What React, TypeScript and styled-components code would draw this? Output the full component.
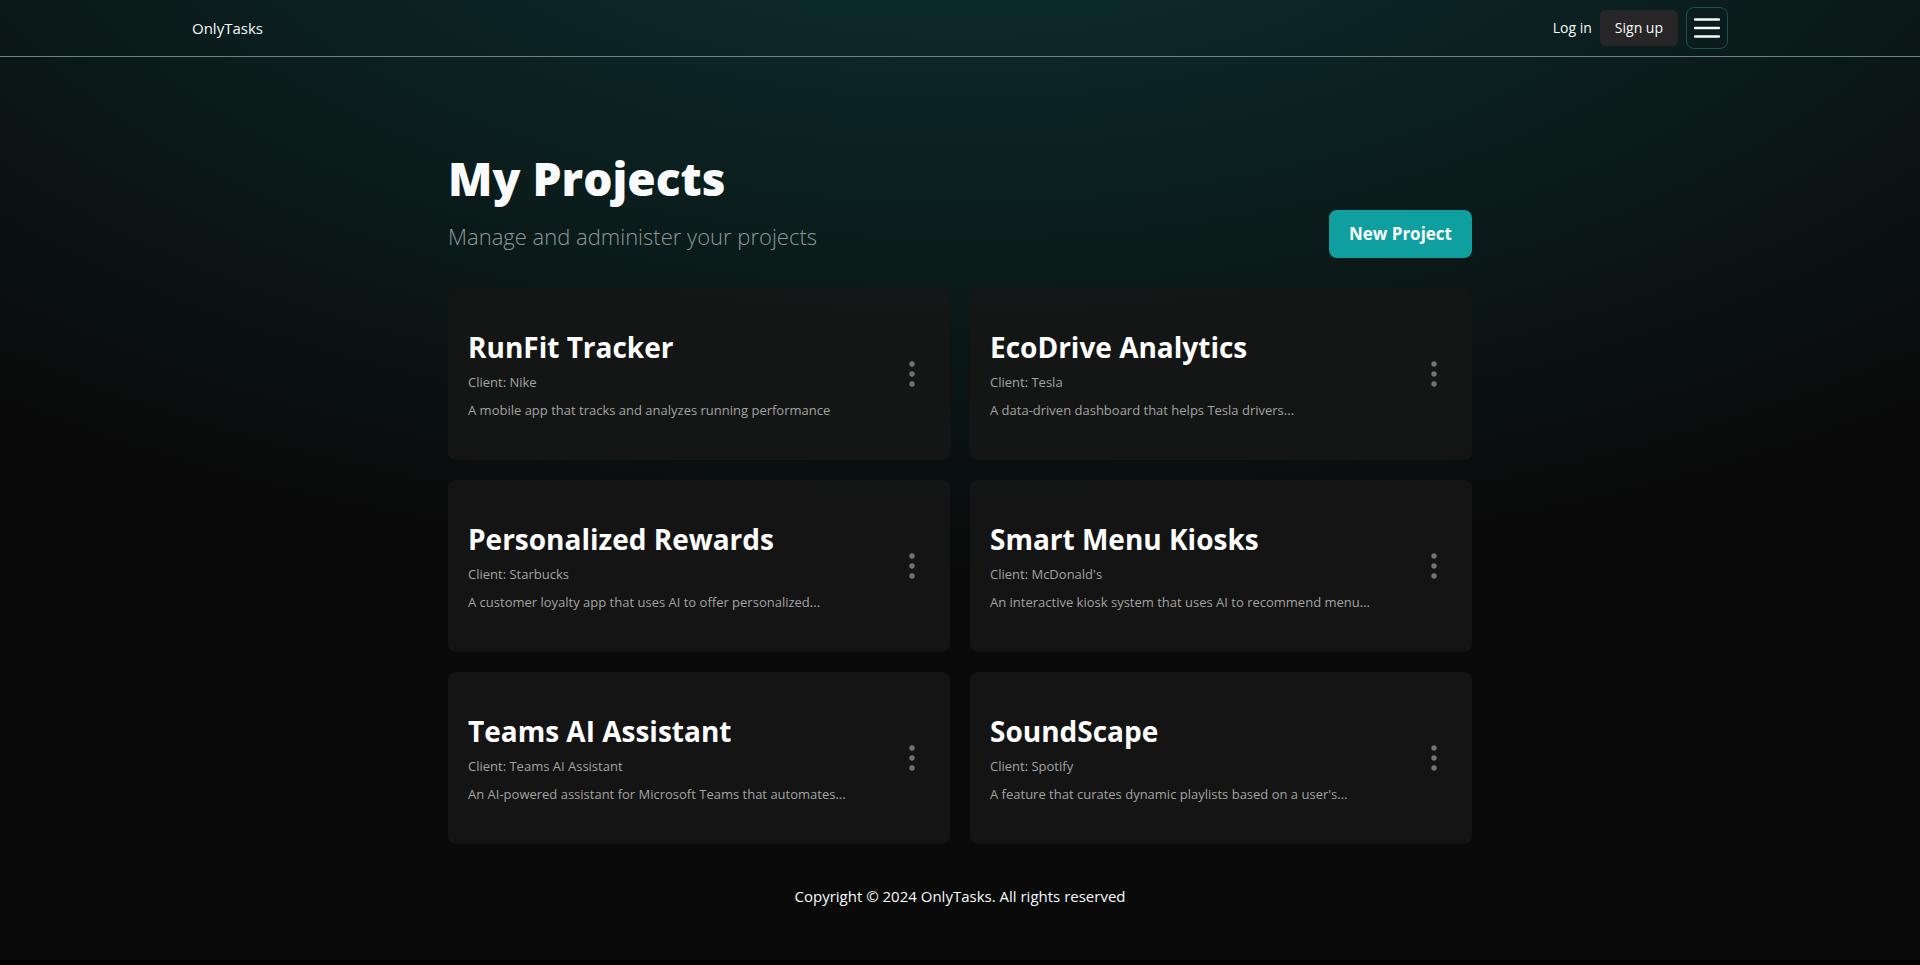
import React from "react";
import styled, { createGlobalStyle } from "styled-components";

const GlobalStyle = createGlobalStyle`
  *, *::before, *::after { box-sizing: border-box; }
  html { background: #000; }
  body {
    margin: 0;
    color: #f8fafc;
    font-family: "Segoe UI", "Open Sans", "Noto Sans", sans-serif;
    font-size: 15px;
    line-height: 24px;
  }
  h1, h2, p, ul { margin: 0; padding: 0; }
  button { font: inherit; cursor: pointer; }
`;

const Page = styled.div`
  min-height: calc(100vh - 5px);
  display: flex;
  flex-direction: column;
  background:
    radial-gradient(ellipse 80% 80% at 50% -20%, rgba(14, 88, 86, 0.54), rgba(10, 10, 10, 0)),
    #0a0a0a;
`;

const Header = styled.header`
  border-bottom: 1px solid #6b8482;
`;

const Nav = styled.nav`
  width: 80%;
  height: 56px;
  margin: 0 auto;
  display: flex;
  align-items: center;
  justify-content: space-between;
`;

const Brand = styled.a`
  color: inherit;
  text-decoration: none;
`;

const Actions = styled.div`
  display: flex;
  align-items: center;
  gap: 8px;
`;

const LoginLink = styled.a`
  color: inherit;
  font-size: 14px;
  line-height: 20px;
  text-decoration: none;
`;

const SignUpButton = styled.button`
  height: 36px;
  padding: 0 15px;
  border: 0;
  border-radius: 6px;
  background: #262626;
  color: inherit;
  font-size: 14px;
  line-height: 20px;
`;

const MenuButton = styled.button`
  width: 42px;
  height: 42px;
  display: grid;
  place-items: center;
  padding: 0;
  border: 1px solid #17544f;
  border-radius: 8px;
  background: transparent;
  color: inherit;
`;

const Main = styled.main`
  width: 100%;
  max-width: 1024px;
  margin: 0 auto;
  padding-top: 91px;
`;

const Intro = styled.section`
  display: flex;
  align-items: flex-end;
  justify-content: space-between;
  margin-bottom: 30px;
`;

const Title = styled.h1`
  font-size: 46px;
  font-weight: 800;
  line-height: 60px;
`;

const Subtitle = styled.p`
  padding: 8px 0 2px;
  color: #8b9a9a;
  font-size: 22px;
  font-weight: 300;
  line-height: 40px;
`;

const NewProjectButton = styled.button`
  height: 48px;
  padding: 0 20px;
  border: 0;
  border-radius: 8px;
  background: #109f9f;
  color: inherit;
  font-size: 17px;
  font-weight: 700;
`;

const Grid = styled.ul`
  display: grid;
  grid-template-columns: repeat(2, minmax(0, 1fr));
  gap: 20px;
  list-style: none;
`;

const Card = styled.li`
  display: flex;
  align-items: center;
  justify-content: space-between;
  padding: 40px 20px;
  border-radius: 8px;
  background: rgba(23, 23, 23, 0.8);
`;

const CardTitle = styled.h2`
  margin-bottom: 6px;
  color: #fff;
  font-size: 28px;
  font-weight: 700;
  line-height: 38px;
`;

const CardText = styled.p`
  color: #a3a3a3;
  font-size: 13px;
  line-height: 20px;

  & + & {
    margin-top: 8px;
  }
`;

const OptionsButton = styled.button`
  width: 36px;
  height: 36px;
  display: grid;
  place-items: center;
  padding: 0;
  border: 0;
  background: transparent;
  color: #737373;
`;

const Footer = styled.footer`
  padding: 40px 0;
  text-align: center;
`;

const MenuIcon = () => (
  <svg width="34" height="34" viewBox="0 0 34 34" fill="none" stroke="currentColor" strokeWidth="2.6" strokeLinecap="round" aria-hidden="true">
    <path d="M5.2 8.5h23.6M5.2 17h23.6M5.2 25.5h23.6" />
  </svg>
);

const DotsIcon = () => (
  <svg width="36" height="36" viewBox="0 0 36 36" fill="currentColor" aria-hidden="true">
    <circle cx="18" cy="8" r="2.7" />
    <circle cx="18" cy="18" r="2.7" />
    <circle cx="18" cy="28" r="2.7" />
  </svg>
);

interface Project {
  name: string;
  client: string;
  description: string;
}

const projects: Project[] = [
  { name: "RunFit Tracker", client: "Nike", description: "A mobile app that tracks and analyzes running performance" },
  { name: "EcoDrive Analytics", client: "Tesla", description: "A data-driven dashboard that helps Tesla drivers..." },
  { name: "Personalized Rewards", client: "Starbucks", description: "A customer loyalty app that uses AI to offer personalized..." },
  { name: "Smart Menu Kiosks", client: "McDonald's", description: "An interactive kiosk system that uses AI to recommend menu..." },
  { name: "Teams AI Assistant", client: "Teams AI Assistant", description: "An AI-powered assistant for Microsoft Teams that automates..." },
  { name: "SoundScape", client: "Spotify", description: "A feature that curates dynamic playlists based on a user's..." },
];

const ProjectCard = ({ name, client, description }: Project) => (
  <Card>
    <div>
      <CardTitle>{name}</CardTitle>
      <CardText>Client: {client}</CardText>
      <CardText>{description}</CardText>
    </div>
    <OptionsButton type="button" aria-label={`Options for ${name}`}>
      <DotsIcon />
    </OptionsButton>
  </Card>
);

export default function App() {
  return (
    <>
      <GlobalStyle />
      <Page>
        <Header>
          <Nav>
            <Brand href="#">OnlyTasks</Brand>
            <Actions>
              <LoginLink href="#login">Log in</LoginLink>
              <SignUpButton type="button">Sign up</SignUpButton>
              <MenuButton type="button" aria-label="Menu">
                <MenuIcon />
              </MenuButton>
            </Actions>
          </Nav>
        </Header>
        <Main>
          <Intro>
            <div>
              <Title>My Projects</Title>
              <Subtitle>Manage and administer your projects</Subtitle>
            </div>
            <NewProjectButton type="button">New Project</NewProjectButton>
          </Intro>
          <Grid>
            {projects.map((project) => (
              <ProjectCard key={project.name} {...project} />
            ))}
          </Grid>
        </Main>
        <Footer>
          <p>Copyright © 2024 OnlyTasks. All rights reserved</p>
        </Footer>
      </Page>
    </>
  );
}
